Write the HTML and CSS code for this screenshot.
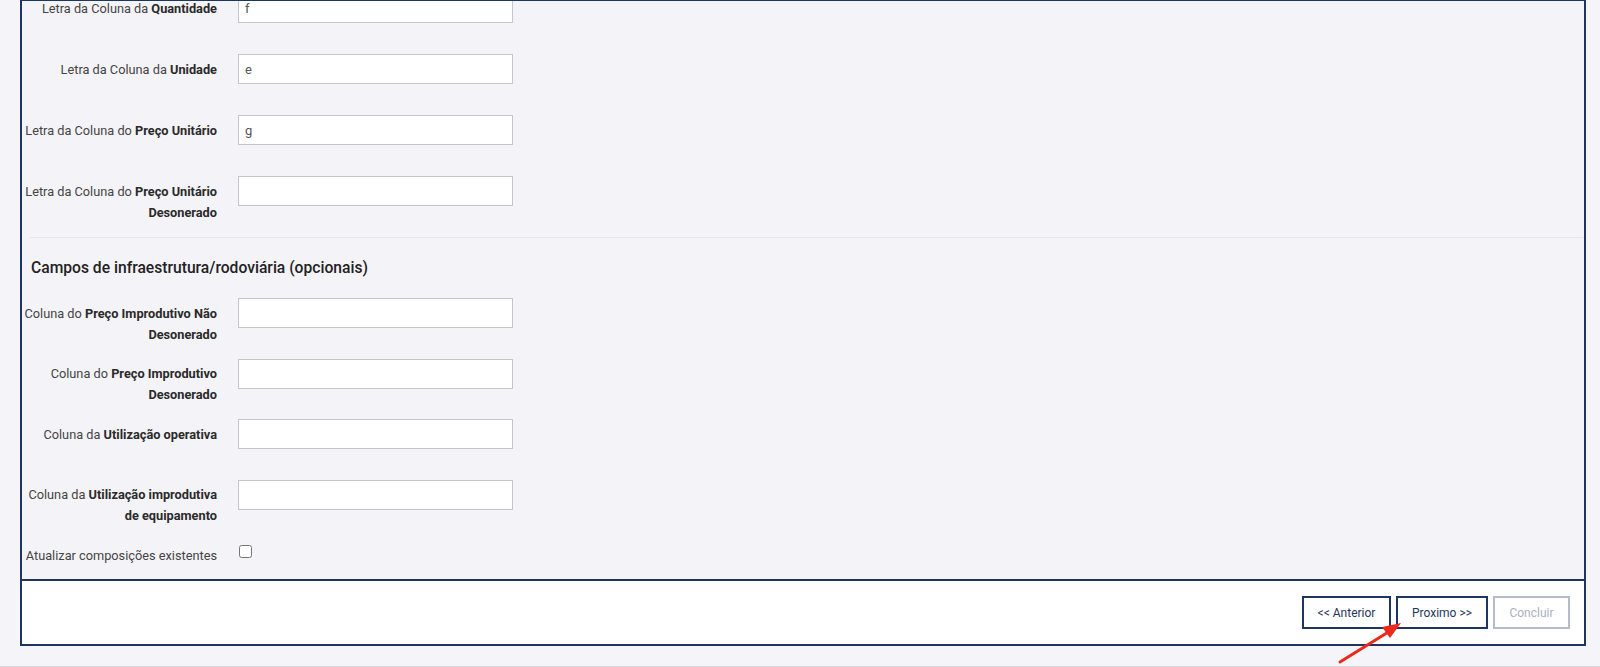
FILE: index.html
```html
<!DOCTYPE html>
<html lang="pt-BR">
  <head>
    <meta charset="UTF-8" />
    <meta name="viewport" content="width=device-width, initial-scale=1.0" />
    <title>Importar composições</title>
    <link rel="stylesheet" href="styles.css">
  </head>
  <body>
    <div class="page">
      <!-- passo do assistente de importação -->
      <div class="wizard">
        <form class="wizard-body" name="import_form" id="import_form">
          <div class="form-row first">
            <label for="col_qtd" class="col-label">Letra da Coluna da <b>Quantidade</b></label>
            <div class="col-field"><input type="text" id="col_qtd" class="form-control" value="f" /></div>
          </div>
          <div class="form-row">
            <label for="col_un" class="col-label">Letra da Coluna da <b>Unidade</b></label>
            <div class="col-field"><input type="text" id="col_un" class="form-control" value="e" /></div>
          </div>
          <div class="form-row">
            <label for="col_pu" class="col-label">Letra da Coluna do <b>Preço Unitário</b></label>
            <div class="col-field"><input type="text" id="col_pu" class="form-control" value="g" /></div>
          </div>
          <div class="form-row">
            <label for="col_pu_des" class="col-label">Letra da Coluna do <b>Preço Unitário<br />Desonerado</b></label>
            <div class="col-field"><input type="text" id="col_pu_des" class="form-control" /></div>
          </div>

          <h4 class="section-title">Campos de infraestrutura/rodoviária (opcionais)</h4>

          <div class="form-row tight">
            <label for="col_pi_nd" class="col-label">Coluna do <b>Preço Improdutivo Não<br />Desonerado</b></label>
            <div class="col-field"><input type="text" id="col_pi_nd" class="form-control" /></div>
          </div>
          <div class="form-row tight">
            <label for="col_pi_d" class="col-label">Coluna do <b>Preço Improdutivo<br />Desonerado</b></label>
            <div class="col-field"><input type="text" id="col_pi_d" class="form-control" /></div>
          </div>
          <div class="form-row tight">
            <label for="col_uo" class="col-label">Coluna da <b>Utilização operativa</b></label>
            <div class="col-field"><input type="text" id="col_uo" class="form-control" /></div>
          </div>
          <div class="form-row tight">
            <label for="col_ui" class="col-label">Coluna da <b>Utilização improdutiva<br />de equipamento</b></label>
            <div class="col-field"><input type="text" id="col_ui" class="form-control" /></div>
          </div>
          <div class="form-row check-row">
            <label for="update_existing" class="col-label">Atualizar composições existentes</label>
            <div class="col-field"><input type="checkbox" id="update_existing" class="check" /></div>
          </div>
        </form>

        <div class="wizard-footer">
          <button type="button" class="btn btn-prev">&lt;&lt; Anterior</button>
          <button type="button" class="btn btn-next">Proximo &gt;&gt;</button>
          <button type="button" class="btn btn-done" disabled>Concluir</button>
        </div>
      </div>
    </div>

    <!-- seta de destaque -->
    <svg class="pointer" width="80" height="60" viewBox="0 0 80 60">
      <line x1="8" y1="50" x2="58" y2="19" stroke="#ec2a1c" stroke-width="3" stroke-linecap="round" />
      <polygon points="69,11 50,15 58,26" fill="#ec2a1c" />
    </svg>
  </body>
</html>
```

FILE: styles.css
```css
* {
  box-sizing: border-box;
}

body {
  margin: 0;
  background: #f5f4f8;
  font-family: Roboto, "Liberation Sans", sans-serif;
  color: #3d3d3d;
  overflow: hidden;
}

.page {
  height: 667px;
  padding-left: 20px;
  border-bottom: 1px solid #d9d9de;
}

.wizard {
  width: 1566px;
  border: 2px solid #1c3660;
  border-top-width: 1px;
}

.wizard-body {
  margin: 0;
  height: 578px;
  overflow: hidden;
  background: #f4f3f7;
}

.form-row {
  display: grid;
  grid-template-columns: 195px 275px;
  column-gap: 21px;
  height: 61px;
}

.form-row.first {
  margin-top: -8px;
}

.form-row.tight {
  height: 60.5px;
}

.form-row.check-row {
  height: 39px;
}

.col-label {
  display: block;
  text-align: right;
  white-space: nowrap;
  font-size: 12.75px;
  line-height: 21px;
  padding-top: 4.5px;
  color: #444;
}

.col-label b {
  font-weight: 700;
  color: #2a2a2a;
}

.form-control {
  display: block;
  width: 100%;
  height: 30px;
  margin: 0;
  padding: 0 6px;
  font-family: Roboto, "Liberation Sans", sans-serif;
  font-size: 13px;
  color: #555;
  background: #fff;
  border: 1px solid #c6c6c8;
  border-radius: 0;
  outline: none;
}

.check {
  margin: 5px 0 0 1px;
  width: 13px;
  height: 13px;
}

.section-title {
  margin: 0 0 0 8px;
  height: 61px;
  padding: 20px 0 0 1px;
  border-top: 1px solid #e7e6eb;
  font-size: 15.65px;
  line-height: 20px;
  font-weight: 500;
  color: #222;
}

.wizard-footer {
  display: flex;
  justify-content: flex-end;
  gap: 5px;
  padding: 15px 14px 15px;
  background: #fff;
  border-top: 2px solid #1c3660;
}

.btn {
  height: 33px;
  padding: 0;
  white-space: nowrap;
  font-family: Roboto, "Liberation Sans", sans-serif;
  font-size: 12px;
  color: #1f365a;
  background: #fff;
  border: 2px solid #1c3660;
  border-radius: 0;
}

.btn-prev {
  width: 89px;
}

.btn-next {
  width: 92px;
}

.btn-done {
  width: 77px;
}

.btn:disabled {
  color: #a9b1bd;
  border-color: #b3bccb;
}

.pointer {
  position: absolute;
  left: 1332px;
  top: 612px;
}
```
